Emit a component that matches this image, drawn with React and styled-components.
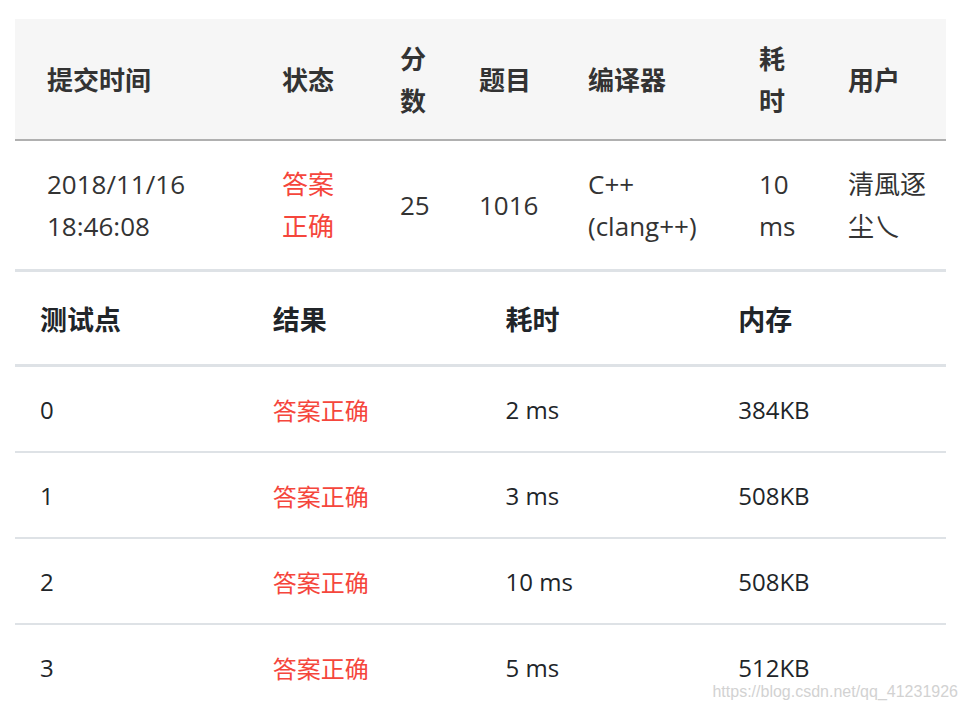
import styled, { createGlobalStyle } from "styled-components";

const GlobalStyle = createGlobalStyle`
  html, body {
    margin: 0;
    padding: 0;
    background: #ffffff;
  }
  body {
    font-family: "Open Sans", "Noto Sans CJK SC", sans-serif;
    color: #333333;
  }
`;

const submission = {
  time: "2018/11/16 18:46:08",
  status: "答案正确",
  score: "25",
  problem: "1016",
  compiler: "C++ (clang++)",
  cost: "10 ms",
  user: "清風逐尘乀",
};

const cases = [
  { id: 0, result: "答案正确", time: "2 ms", mem: "384KB" },
  { id: 1, result: "答案正确", time: "3 ms", mem: "508KB" },
  { id: 2, result: "答案正确", time: "10 ms", mem: "508KB" },
  { id: 3, result: "答案正确", time: "5 ms", mem: "512KB" },
];

// column: [width, padding-right]
const cols = [
  [251, 16],
  [118, 50],
  [79, 20],
  [109, 16],
  [171, 16],
  [89, 30],
  [114, 10],
];

function App() {
  return (
    <Page>
      <GlobalStyle />
      <SubmitTable>
        <HeadRow>
          {["提交时间", "状态", "分数", "题目", "编译器", "耗时", "用户"].map((h, i) => (
            <Cell key={h} $w={cols[i][0]} $pr={cols[i][1]} $first={i === 0} $head>
              {h}
            </Cell>
          ))}
        </HeadRow>
        <BodyRow>
          {[
            submission.time,
            submission.status,
            submission.score,
            submission.problem,
            submission.compiler,
            submission.cost,
            submission.user,
          ].map((v, i) => (
            <Cell key={i} $w={cols[i][0]} $pr={cols[i][1]} $first={i === 0} $ok={i === 1}>
              {v}
            </Cell>
          ))}
        </BodyRow>
      </SubmitTable>

      <CaseTable>
        <CaseHead>
          <span>测试点</span>
          <span>结果</span>
          <span>耗时</span>
          <span>内存</span>
        </CaseHead>
        {cases.map((c) => (
          <CaseRow key={c.id}>
            <span>{c.id}</span>
            <Ok>{c.result}</Ok>
            <span>{c.time}</span>
            <span>{c.mem}</span>
          </CaseRow>
        ))}
      </CaseTable>

      <Watermark>https://blog.csdn.net/qq_41231926</Watermark>
    </Page>
  );
}

const Page = styled.div`
  position: relative;
  box-sizing: border-box;
  width: 968px;
  height: 709px;
  padding: 19px 22px 0 15px;
  overflow: hidden;
`;

const SubmitTable = styled.div`
  display: flex;
  flex-direction: column;
  border-bottom: 3px solid #dee2e6;
`;

const HeadRow = styled.div`
  display: flex;
  align-items: center;
  background: #f6f6f6;
  border-bottom: 2px solid #b0b0b0;
  padding: 19px 0 17px;
`;

const BodyRow = styled.div`
  display: flex;
  align-items: center;
  padding: 22px 0 22px;
`;

const Cell = styled.div`
  box-sizing: border-box;
  flex: 0 0 ${(p) => p.$w}px;
  padding-left: ${(p) => (p.$first ? 32 : 16)}px;
  padding-right: ${(p) => p.$pr}px;
  font-size: 26px;
  line-height: 42px;
  font-weight: ${(p) => (p.$head ? 700 : 400)};
  color: ${(p) => (p.$ok ? "#f5463c" : "#333333")};
`;

const CaseTable = styled.div`
  display: flex;
  flex-direction: column;
`;

const CaseHead = styled.div`
  display: grid;
  grid-template-columns: repeat(4, 1fr);
  height: 92px;
  align-items: center;
  border-bottom: 3px solid #dee2e6;
  font-size: 27px;
  font-weight: 700;
  color: #212529;
  span {
    padding-left: 25px;
  }
`;

const CaseRow = styled.div`
  display: grid;
  grid-template-columns: repeat(4, 1fr);
  height: 84px;
  align-items: center;
  border-bottom: 2px solid #dee2e6;
  font-size: 24px;
  color: #212529;
  span {
    padding-left: 25px;
  }
`;

const Ok = styled.span`
  color: #f5463c;
`;

const Watermark = styled.div`
  position: absolute;
  right: 10px;
  bottom: 8px;
  font-family: "Liberation Sans", Arial, sans-serif;
  font-size: 16px;
  color: #d2d2d2;
`;

export default App;
